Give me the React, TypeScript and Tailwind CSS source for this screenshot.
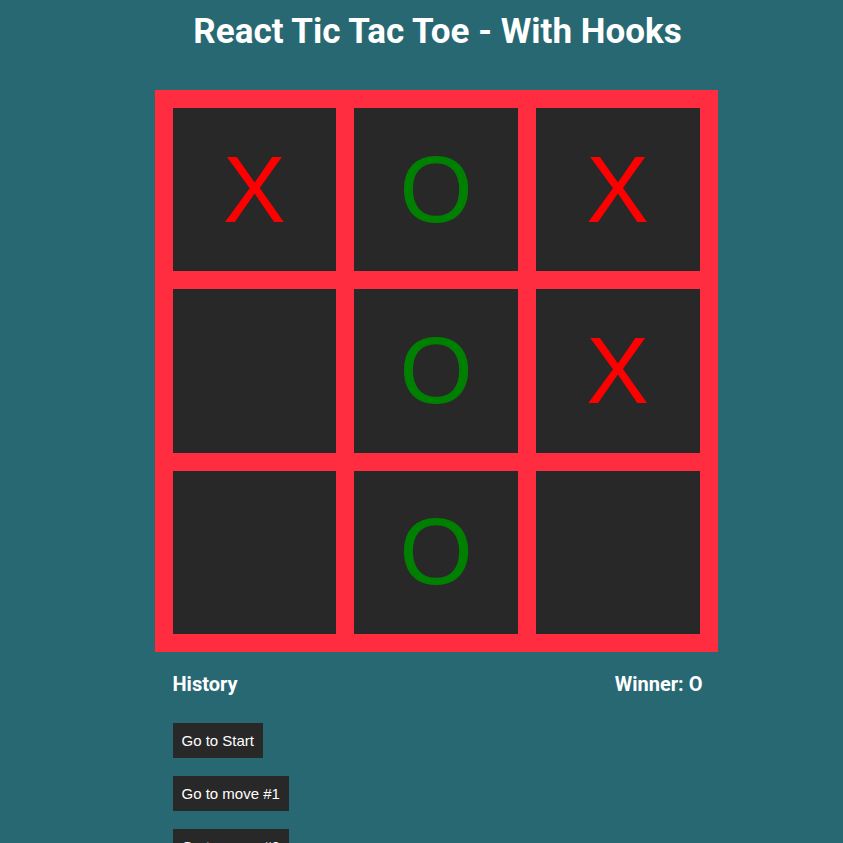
const squares = ['X', 'O', 'X', null, 'O', 'X', null, 'O', null];

const moves = ['Go to Start', 'Go to move #1', 'Go to move #2', 'Go to move #3', 'Go to move #4', 'Go to move #5', 'Go to move #6'];

const Square = ({ value }: { value: string | null }) => (
  <button
    className={`flex items-center justify-center bg-[#282828] text-[94px] leading-none font-['Liberation_Sans',Arial,sans-serif] ${
      value === 'X' ? 'text-[#ff0000]' : 'text-[#008000]'
    }`}
  >
    {value}
  </button>
);

const App = () => {
  return (
    <div className="min-h-screen bg-[#276873] text-white pl-[32px] pb-10">
      <div className="flex flex-col items-center">
        <h1 className="mt-[11px] text-[35px] font-bold font-['Roboto',sans-serif] leading-[42px]">
          React Tic Tac Toe - With Hooks
        </h1>
      </div>

      <div className="flex flex-col items-center pr-[3px]">
        {/* Board */}
        <div className="mt-[37px] w-[563px] h-[562px] bg-[#ff2d3f] p-[18px] grid grid-cols-3 grid-rows-3 gap-[18px]">
          {squares.map((sq, i) => (
            <Square key={i} value={sq} />
          ))}
        </div>

        {/* Info */}
        <div className="w-[563px] pl-[18px] pr-[15px] mt-[21px]">
          <div className="flex justify-between font-['Roboto',sans-serif] font-bold text-[20px] leading-[23px]">
            <h3>History</h3>
            <h3>Winner: O</h3>
          </div>
          <ul className="mt-[27px] flex flex-col gap-[18px] items-start">
            {moves.map((m) => (
              <li key={m}>
                <button className="h-[35px] px-[9px] pt-[1px] bg-[#282828] text-white text-[15px] font-['Liberation_Sans',Arial,sans-serif]">
                  {m}
                </button>
              </li>
            ))}
          </ul>
        </div>
      </div>
    </div>
  );
};

export default App;
